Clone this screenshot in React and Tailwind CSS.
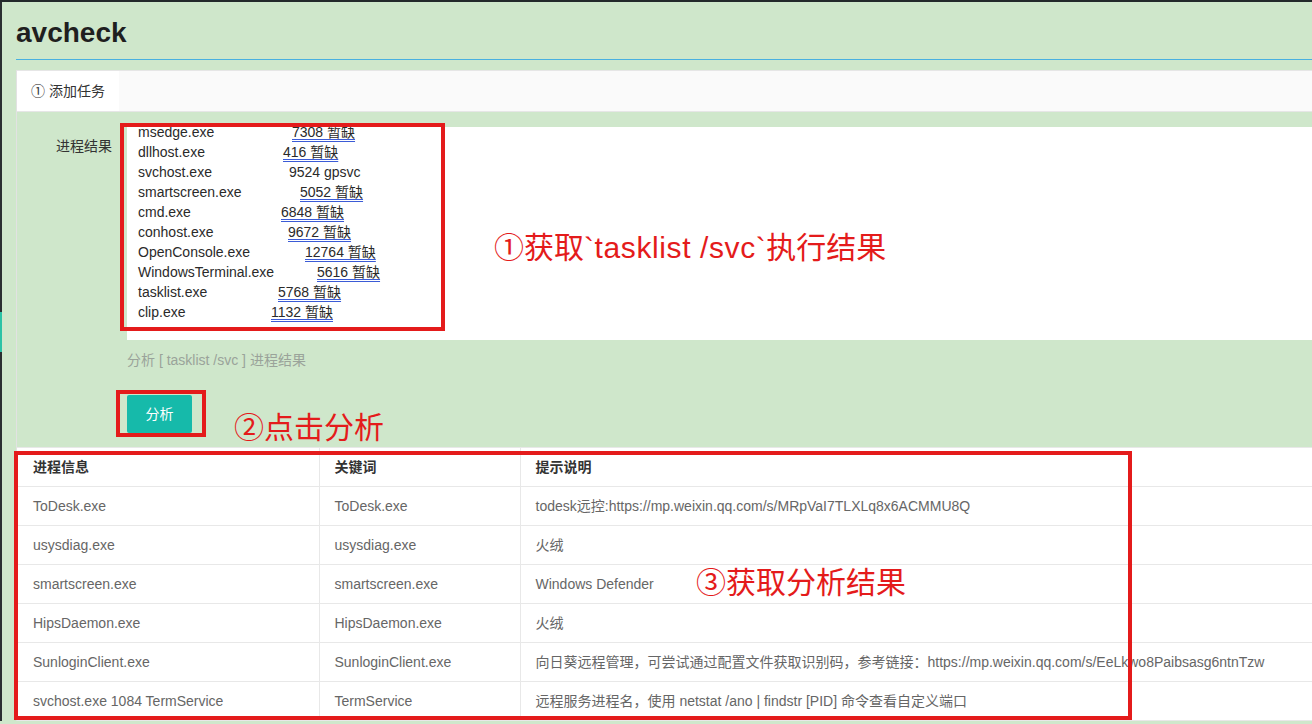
const taskLines = [
  { name: 'msedge.exe', pid: '7308 暂缺', w: 'w-[154px]', link: true },
  { name: 'dllhost.exe', pid: '416 暂缺', w: 'w-[145px]', link: true },
  { name: 'svchost.exe', pid: '9524 gpsvc', w: 'w-[148px]', link: false },
  { name: 'smartscreen.exe', pid: '5052 暂缺', w: 'w-[162px]', link: true },
  { name: 'cmd.exe', pid: '6848 暂缺', w: 'w-[143px]', link: true },
  { name: 'conhost.exe', pid: '9672 暂缺', w: 'w-[150px]', link: true },
  { name: 'OpenConsole.exe', pid: '12764 暂缺', w: 'w-[167px]', link: true },
  { name: 'WindowsTerminal.exe', pid: '5616 暂缺', w: 'w-[179px]', link: true },
  { name: 'tasklist.exe', pid: '5768 暂缺', w: 'w-[140px]', link: true },
  { name: 'clip.exe', pid: '1132 暂缺', w: 'w-[133px]', link: true },
];

const results = [
  ['ToDesk.exe', 'ToDesk.exe', 'todesk远控:https://mp.weixin.qq.com/s/MRpVaI7TLXLq8x6ACMMU8Q'],
  ['usysdiag.exe', 'usysdiag.exe', '火绒'],
  ['smartscreen.exe', 'smartscreen.exe', 'Windows Defender'],
  ['HipsDaemon.exe', 'HipsDaemon.exe', '火绒'],
  ['SunloginClient.exe', 'SunloginClient.exe', '向日葵远程管理，可尝试通过配置文件获取识别码，参考链接：https://mp.weixin.qq.com/s/EeLkwo8Paibsasg6ntnTzw'],
  ['svchost.exe 1084 TermService', 'TermService', '远程服务进程名，使用 netstat /ano | findstr [PID] 命令查看自定义端口'],
];

export default function App() {
  return (
    <div className="relative h-[724px] overflow-hidden bg-[#cfe7cb] font-['Liberation_Sans','Noto_Sans_CJK_SC',sans-serif] text-[14px] text-[#333]">
      <div className="h-[2px] bg-[#23292b]" />
      <div className="flex">
        {/* left edge strip */}
        <div className="w-[2px] shrink-0 self-stretch bg-[#2a2f31]">
          <div className="mt-[310px] h-[40px] bg-[#2bc3a6]" />
        </div>

        <div className="flex-1 pl-[14px]">
          <h1 className="mt-[13px] text-[28px] font-bold leading-[36px] text-[#1f1f1f]">avcheck</h1>
          <div className="mt-[8px] h-px bg-[#49b0e0]" />

          <div className="mt-[10px] border-l border-[#e2e2e2]">
            {/* tab bar */}
            <div className="flex h-[42px] border-y border-[#e6e6e6] bg-[#fafafa]">
              <div className="flex w-[102px] items-center bg-white pl-[14px] text-[14px] text-[#333]">① 添加任务</div>
            </div>

            {/* form */}
            <div className="pt-[15px] pb-[14px]">
              <div className="flex">
                <label className="w-[110px] shrink-0 px-[15px] py-[9px] text-right leading-[20px] text-[#333]">进程结果</label>
                <div className="h-[213px] flex-1 overflow-hidden bg-white pl-[11px]">
                  <div className="-mt-[5px] text-[14px] leading-[20px] text-[#2a2a2a]">
                    {taskLines.map((l) => (
                      <div key={l.name} className="flex whitespace-nowrap">
                        <span className={l.w}>{l.name}</span>
                        <span className={l.link ? 'underline decoration-double decoration-[#3b5bd6] underline-offset-2' : 'pl-[3px]'}>{l.pid}</span>
                      </div>
                    ))}
                  </div>
                </div>
              </div>
              <div className="ml-[110px] mt-px py-[9px] leading-[20px] text-[#9aa39a]">分析 [ tasklist /svc ] 进程结果</div>
              <div className="ml-[110px] mt-[16px]">
                <button className="h-[38px] w-[65px] rounded-[2px] bg-[#16baaa] text-[14px] text-white">分析</button>
              </div>
            </div>

            {/* results table */}
            <table className="w-full border-collapse bg-white text-left text-[14px]">
              <thead>
                <tr className="border-y border-[#e8e8e8]">
                  <th className="w-[302px] px-[16px] py-[9px] font-bold leading-[20px] text-[#333]">进程信息</th>
                  <th className="w-[201px] border-l border-[#e8e8e8] px-[15px] py-[9px] font-bold leading-[20px] text-[#333]">关键词</th>
                  <th className="border-l border-[#e8e8e8] px-[15px] py-[9px] font-bold leading-[20px] text-[#333]">提示说明</th>
                </tr>
              </thead>
              <tbody>
                {results.map((r) => (
                  <tr key={r[0]} className="border-b border-[#e8e8e8]">
                    <td className="px-[16px] py-[9px] leading-[20px] text-[#666] whitespace-nowrap">{r[0]}</td>
                    <td className="border-l border-[#e8e8e8] px-[15px] py-[9px] leading-[20px] text-[#666] whitespace-nowrap">{r[1]}</td>
                    <td className="border-l border-[#e8e8e8] px-[15px] py-[9px] leading-[20px] text-[#666] whitespace-nowrap">{r[2]}</td>
                  </tr>
                ))}
              </tbody>
            </table>
          </div>
        </div>
      </div>

      {/* red annotations */}
      <div className="pointer-events-none absolute left-[120px] top-[123px] h-[208px] w-[325px] border-4 border-[#e41b1b]" />
      <div className="pointer-events-none absolute left-[116px] top-[390px] h-[47px] w-[90px] border-4 border-[#e41b1b]" />
      <div className="pointer-events-none absolute left-[14px] top-[451px] h-[269px] w-[1118px] border-4 border-[#e41b1b]" />
      <div className="absolute left-[494px] top-[233px] text-[30px] leading-[30px] text-[#e41b1b] whitespace-nowrap">
        ①获取<span className="tracking-[0.6px]">`tasklist /svc`</span>执行结果
      </div>
      <div className="absolute left-[234px] top-[413px] text-[30px] leading-[30px] text-[#e41b1b] whitespace-nowrap">②点击分析</div>
      <div className="absolute left-[696px] top-[568px] text-[30px] leading-[30px] text-[#e41b1b] whitespace-nowrap">③获取分析结果</div>
    </div>
  );
}
